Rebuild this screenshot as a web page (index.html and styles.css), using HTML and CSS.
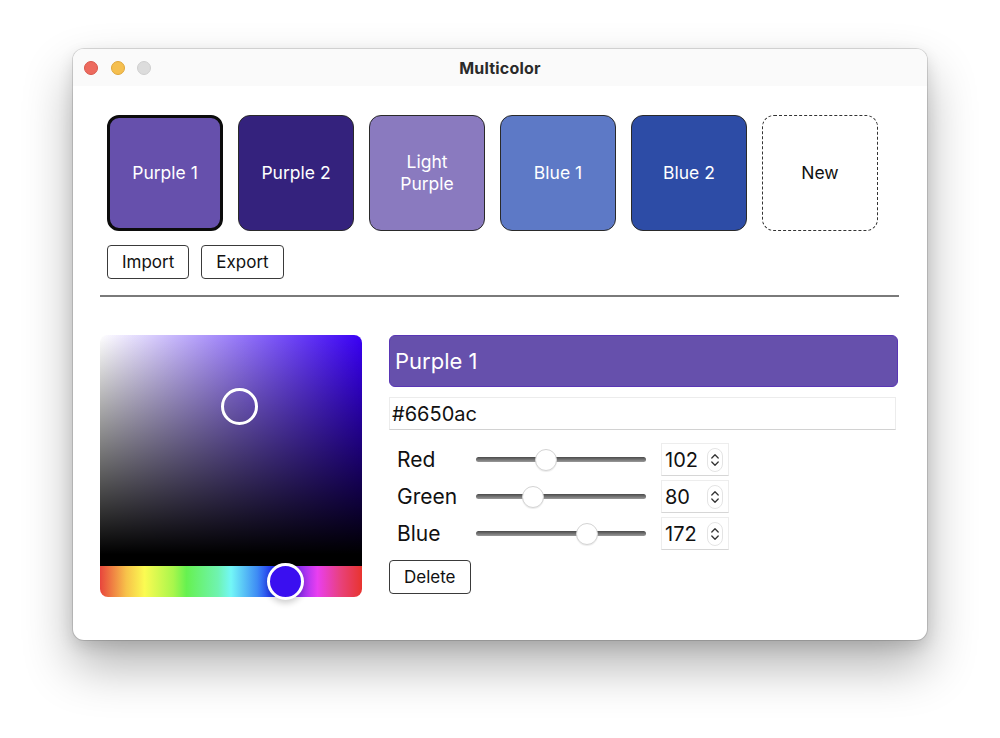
FILE: index.html
```html
<!DOCTYPE html>
<html lang="en">
<head>
<meta charset="utf-8">
<title>Multicolor</title>
<link rel="stylesheet" href="styles.css">
</head>
<body>
<div class="window">
  <div class="titlebar">
    <div class="lights">
      <span class="light red"></span>
      <span class="light yellow"></span>
      <span class="light gray"></span>
    </div>
    <div class="title">Multicolor</div>
  </div>
  <div class="content">
    <div class="palette">
      <div class="swatches">
        <div class="swatch selected c1">Purple 1</div>
        <div class="swatch c2">Purple 2</div>
        <div class="swatch c3">Light<br>Purple</div>
        <div class="swatch c4">Blue 1</div>
        <div class="swatch c5">Blue 2</div>
        <div class="swatch new">New</div>
      </div>
      <div class="actions">
        <button class="btn">Import</button>
        <button class="btn">Export</button>
      </div>
    </div>
    <hr class="divider">
    <div class="editor">
      <div class="picker">
        <div class="sv">
          <span class="sv-handle"></span>
        </div>
        <div class="hue">
          <span class="hue-handle"></span>
        </div>
      </div>
      <div class="fields">
        <div class="name-field">Purple 1</div>
        <div class="hex-field">#6650ac</div>
        <div class="channels">
          <div class="label">Red</div>
          <input class="range" type="range" min="0" max="255" value="102">
          <div class="num"><span>102</span><svg class="spin" width="16" height="24" viewBox="0 0 16 24"><rect x="0.5" y="0.5" width="15" height="23" rx="7.5" fill="#fff" stroke="#e4e4e4"/><path d="M4.8 10 L8 6.8 L11.2 10" fill="none" stroke="#333" stroke-width="1.3" stroke-linecap="round" stroke-linejoin="round"/><path d="M4.8 14 L8 17.2 L11.2 14" fill="none" stroke="#333" stroke-width="1.3" stroke-linecap="round" stroke-linejoin="round"/></svg></div>
          <div class="label">Green</div>
          <input class="range" type="range" min="0" max="255" value="80">
          <div class="num"><span>80</span><svg class="spin" width="16" height="24" viewBox="0 0 16 24"><rect x="0.5" y="0.5" width="15" height="23" rx="7.5" fill="#fff" stroke="#e4e4e4"/><path d="M4.8 10 L8 6.8 L11.2 10" fill="none" stroke="#333" stroke-width="1.3" stroke-linecap="round" stroke-linejoin="round"/><path d="M4.8 14 L8 17.2 L11.2 14" fill="none" stroke="#333" stroke-width="1.3" stroke-linecap="round" stroke-linejoin="round"/></svg></div>
          <div class="label">Blue</div>
          <input class="range" type="range" min="0" max="255" value="172">
          <div class="num"><span>172</span><svg class="spin" width="16" height="24" viewBox="0 0 16 24"><rect x="0.5" y="0.5" width="15" height="23" rx="7.5" fill="#fff" stroke="#e4e4e4"/><path d="M4.8 10 L8 6.8 L11.2 10" fill="none" stroke="#333" stroke-width="1.3" stroke-linecap="round" stroke-linejoin="round"/><path d="M4.8 14 L8 17.2 L11.2 14" fill="none" stroke="#333" stroke-width="1.3" stroke-linecap="round" stroke-linejoin="round"/></svg></div>
        </div>
        <div class="delete-row">
          <button class="btn">Delete</button>
        </div>
      </div>
    </div>
  </div>
</div>
</body>
</html>
```
FILE: styles.css
```css
* { box-sizing: border-box; }
html, body {
  margin: 0;
  padding: 0;
  background: #ffffff;
  font-family: Inter, "Noto Sans", "Liberation Sans", sans-serif;
  color: #111;
}
html { height: 100%; }
body {
  min-height: 738px;
  height: 100%;
  padding: 49px 0 0 73px;
}

.window {
  width: 854px;
  height: 591px;
  background: #fff;
  border-radius: 11px;
  box-shadow: 0 0 0 1px rgba(0,0,0,0.13), 0 26px 50px rgba(0,0,0,0.30), 0 6px 16px rgba(0,0,0,0.12);
  overflow: hidden;
}

.titlebar {
  height: 37px;
  background: #fafafa;
  display: flex;
  align-items: center;
  position: relative;
}
.lights {
  display: flex;
  gap: 12.5px;
  padding-left: 11px;
}
.light {
  width: 14px;
  height: 14px;
  border-radius: 50%;
  display: block;
}
.light.red { background: #ed6a5e; border: 1px solid #d9574b; }
.light.yellow { background: #f5bf4f; border: 1px solid #dfa73a; }
.light.gray { background: #dcdcdc; border: 1px solid #cfcfcf; }
.title {
  position: absolute;
  left: 0; right: 0; top: 0; bottom: 0;
  display: flex;
  align-items: center;
  justify-content: center;
  font-weight: 700;
  font-size: 16px;
  color: #2a2a2a;
  letter-spacing: 0.2px;
}

.content {
  padding: 29px 28px 0 27px;
}
.palette { padding-left: 7px; }
.swatches {
  display: flex;
  gap: 15px;
}
.swatch {
  width: 116px;
  height: 116px;
  border-radius: 12px;
  border: 1px solid #2a2a2a;
  display: flex;
  align-items: center;
  justify-content: center;
  text-align: center;
  color: #fff;
  font-size: 17.5px;
  line-height: 22px;
}
.swatch.selected { border: 3px solid #0c0c0c; }
.c1 { background: #6650ac; }
.c2 { background: #34227d; }
.c3 { background: #8a7abf; }
.c4 { background: #5d79c6; }
.c5 { background: #2d4ca6; }
.swatch.new {
  background: #fff;
  color: #111;
  border: 1.5px dashed #333;
}

.actions {
  display: flex;
  gap: 12px;
  margin-top: 14px;
}
.btn {
  font-family: inherit;
  font-size: 17px;
  color: #111;
  background: #fff;
  border: 1px solid #3a3a3a;
  border-radius: 4px;
  height: 34px;
  padding: 0 14px;
  line-height: 32px;
}

.divider {
  margin: 16px 0 0 0;
  border: none;
  height: 2px;
  background: #7a7a7a;
}

.editor {
  display: flex;
  gap: 27px;
  margin-top: 38px;
}
.picker {
  width: 262px;
  flex: none;
  position: relative;
}
.sv {
  height: 231px;
  border-radius: 8px 8px 0 0;
  background:
    linear-gradient(to top, #000 0%, #000 5%, rgba(0,0,0,0) 100%),
    linear-gradient(to right, #fff 0%, hsl(254, 100%, 48%) 100%);
  position: relative;
}
.sv-handle {
  position: absolute;
  left: 121px;
  top: 53px;
  width: 37px;
  height: 37px;
  border-radius: 50%;
  border: 3px solid #fff;
  box-shadow: 0 0 1px rgba(0,0,0,0.3);
}
.hue {
  height: 31px;
  border-radius: 0 0 8px 8px;
  background: linear-gradient(to right,
    #e8453c 0%, #f7c24a 10%, #fbfb52 17%, #a8f64c 28%, #66f150 33%,
    #6ff3b0 45%, #73f7f7 50%, #3e8cf4 60%, #1a1ef0 67%,
    #8a2ff2 76%, #e93ff0 83%, #e8417a 92%, #e8342e 100%);
  position: relative;
}
.hue-handle {
  position: absolute;
  left: 167px;
  top: -3px;
  width: 37px;
  height: 37px;
  border-radius: 50%;
  background: #3a0ff0;
  border: 3px solid #fff;
  box-shadow: 0 3px 6px rgba(0,0,0,0.2);
}

.fields {
  width: 509px;
  flex: none;
  display: flex;
  flex-direction: column;
}
.name-field {
  height: 52px;
  background: #6650ac;
  border: 1px solid #5936b5;
  border-radius: 6px;
  color: #fff;
  font-size: 22px;
  display: flex;
  align-items: center;
  padding-left: 5px;
}
.hex-field {
  margin-top: 10px;
  width: 507px;
  height: 33px;
  border: 1px solid #ececec;
  border-bottom-color: #d2d2d2;
  font-size: 20px;
  display: flex;
  align-items: center;
  padding-left: 2px;
  color: #111;
}

.channels {
  margin-top: 13px;
  display: grid;
  grid-template-columns: 79px 185px 68px;
  row-gap: 4px;
  padding-left: 8px;
  align-items: center;
}
.label {
  font-size: 21px;
  color: #111;
}
.range {
  -webkit-appearance: none;
  appearance: none;
  width: 170px;
  height: 24px;
  margin: 0;
  background: transparent;
}
.range::-webkit-slider-runnable-track {
  height: 5px;
  border-radius: 3px;
  background: linear-gradient(to bottom, #4a4a4a, #9a9a9a);
}
.range::-webkit-slider-thumb {
  -webkit-appearance: none;
  appearance: none;
  width: 22px;
  height: 22px;
  border-radius: 50%;
  background: #fff;
  border: 1px solid #d4d4d4;
  margin-top: -8.5px;
  box-shadow: 0 1px 1px rgba(0,0,0,0.08);
}
.num {
  height: 33px;
  border: 1px solid #ededed;
  border-bottom-color: #d6d6d6;
  display: flex;
  align-items: center;
  justify-content: space-between;
  padding: 0 5px 0 3px;
  font-size: 20px;
}
.spin { display: block; }

.delete-row {
  margin-top: 10px;
}
```
